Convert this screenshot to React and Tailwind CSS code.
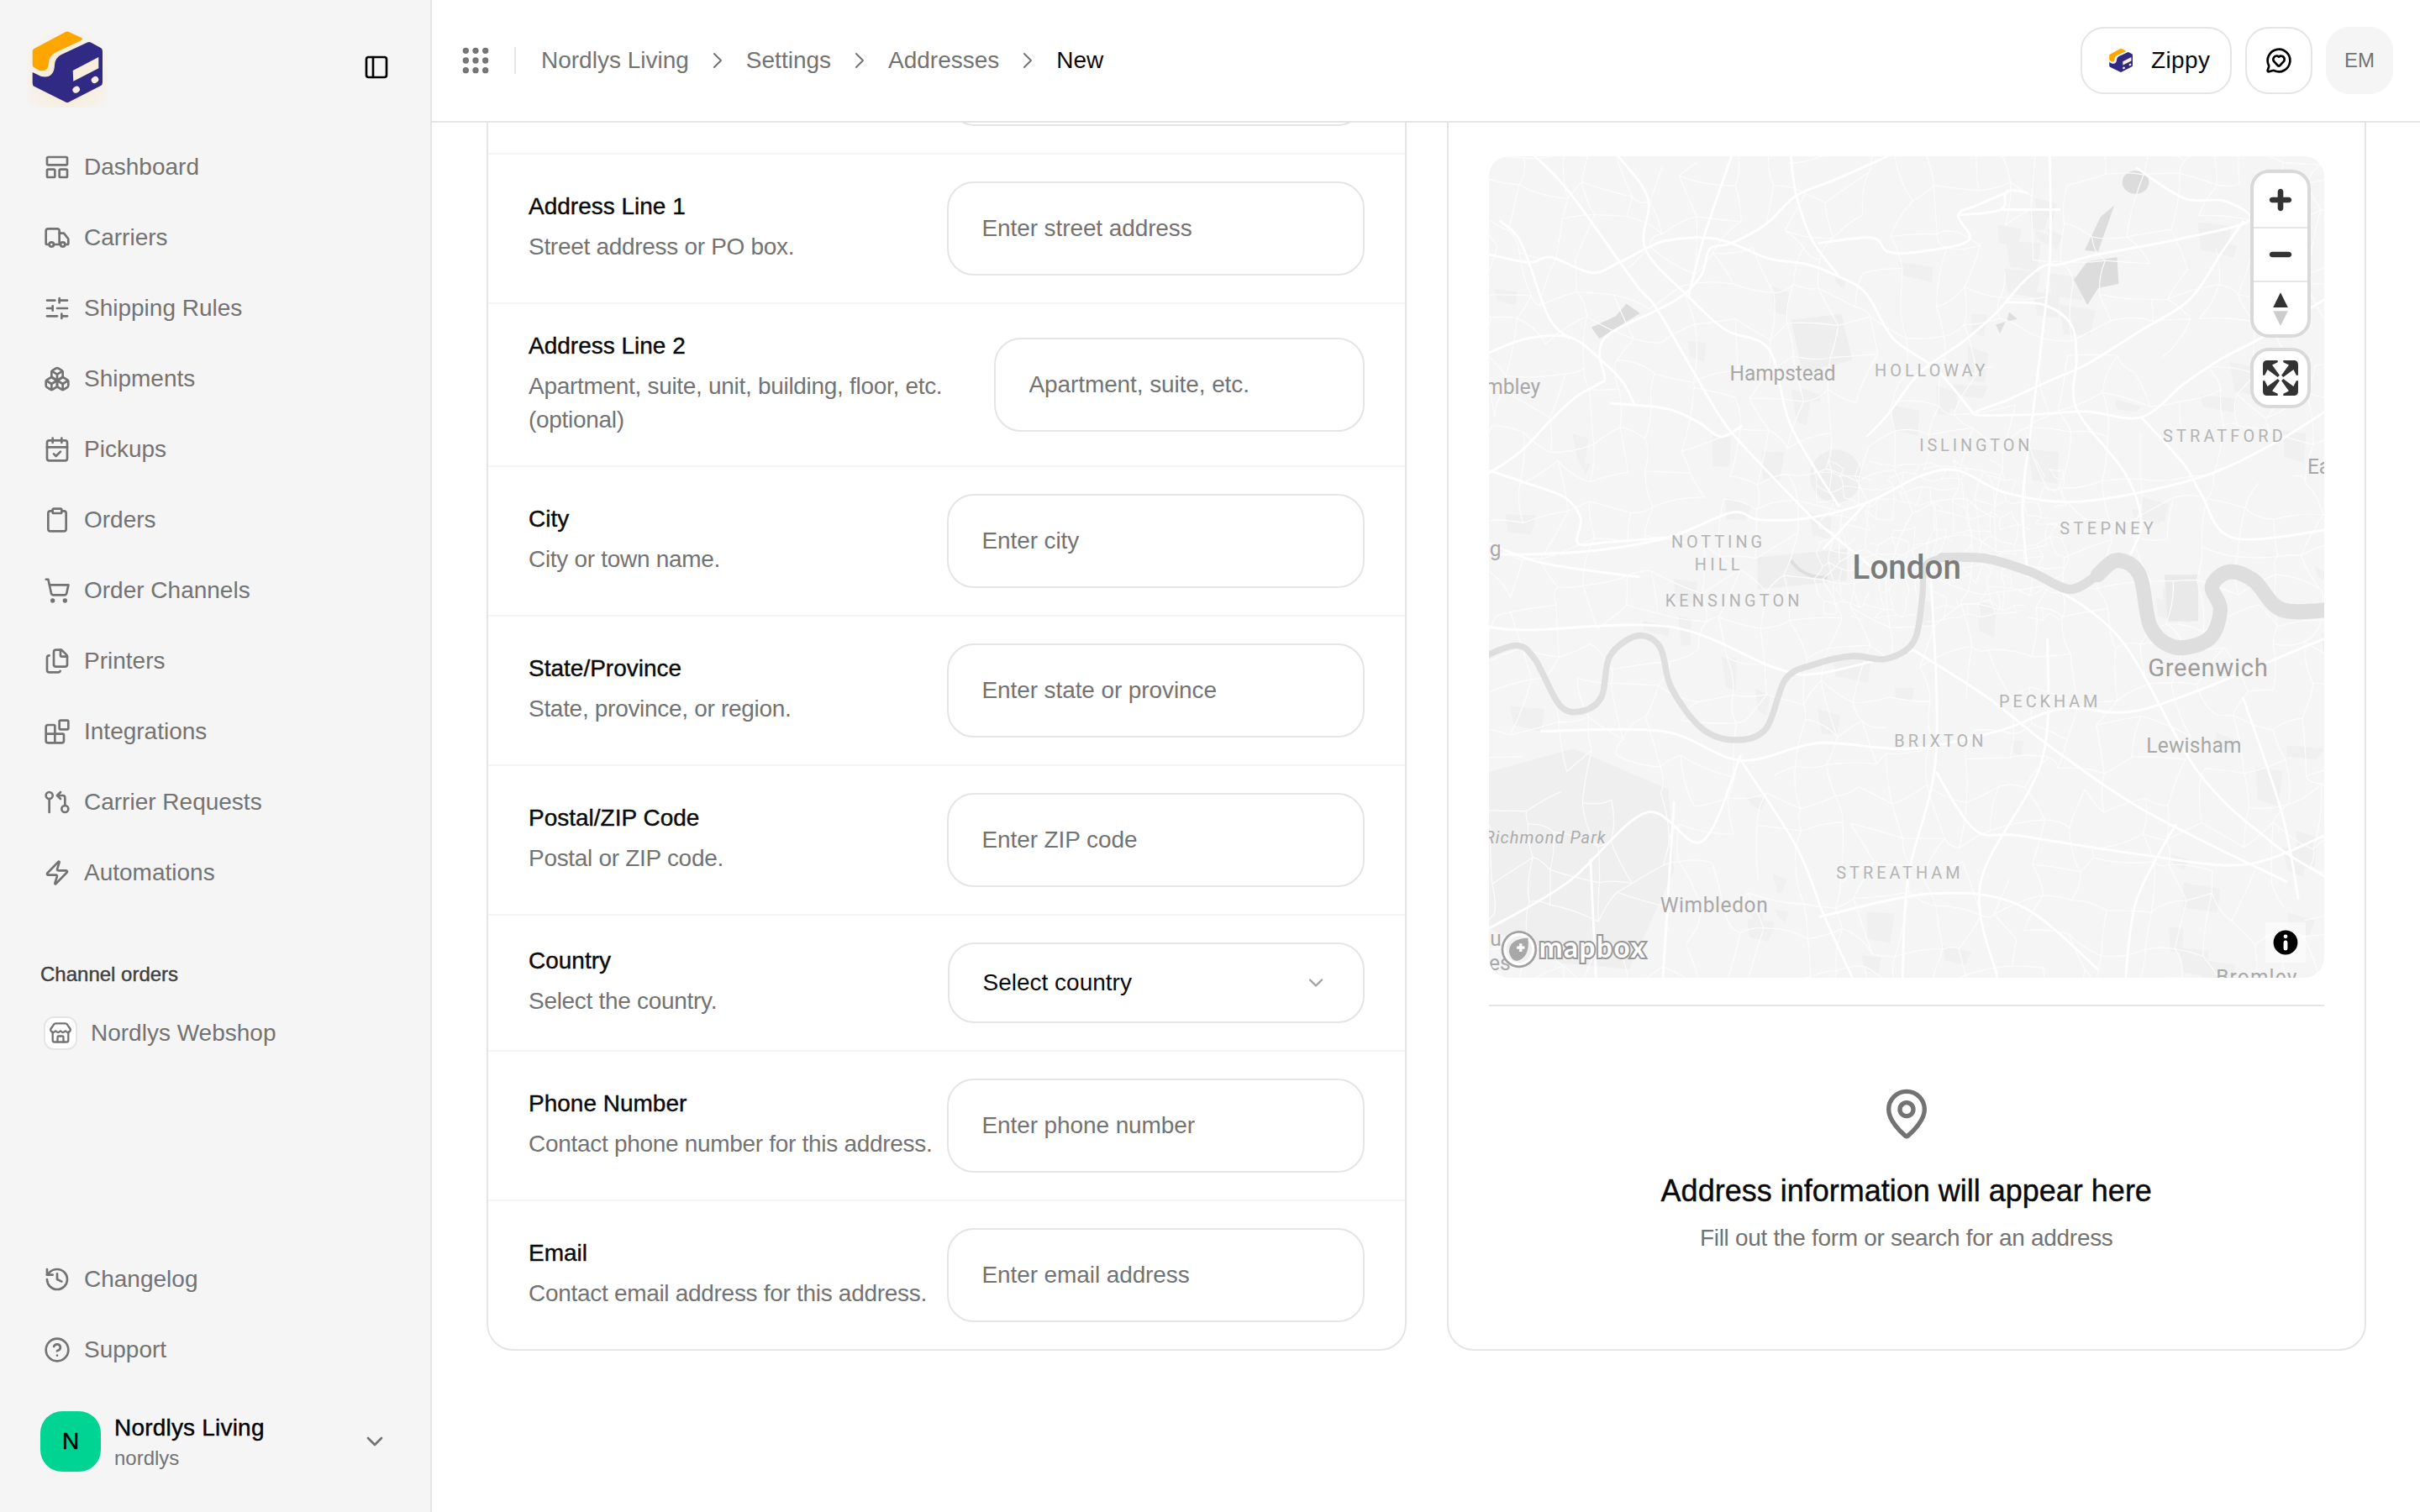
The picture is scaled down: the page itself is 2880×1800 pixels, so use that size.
import {
  Blocks,
  Boxes,
  CalendarCheck,
  ChevronDown,
  ChevronRight,
  CircleHelp,
  Clipboard,
  Files,
  GitPullRequestArrow,
  Grip,
  History,
  LayoutPanelTop,
  MapPin,
  MessageCircleHeart,
  PanelLeft,
  ShoppingCart,
  SlidersHorizontal,
  Store,
  Truck,
  Zap,
} from 'lucide-react'

const medium = '[-webkit-text-stroke:0.2px_currentColor]'

const navItems = [
  { label: 'Dashboard', icon: LayoutPanelTop },
  { label: 'Carriers', icon: Truck },
  { label: 'Shipping Rules', icon: SlidersHorizontal },
  { label: 'Shipments', icon: Boxes },
  { label: 'Pickups', icon: CalendarCheck },
  { label: 'Orders', icon: Clipboard },
  { label: 'Order Channels', icon: ShoppingCart },
  { label: 'Printers', icon: Files },
  { label: 'Integrations', icon: Blocks },
  { label: 'Carrier Requests', icon: GitPullRequestArrow },
  { label: 'Automations', icon: Zap },
]

const fields = [
  { label: 'Address Line 1', hint: 'Street address or PO box.', placeholder: 'Enter street address' },
  {
    label: 'Address Line 2',
    hint: 'Apartment, suite, unit, building, floor, etc. (optional)',
    placeholder: 'Apartment, suite, etc.',
    narrow: true,
  },
  { label: 'City', hint: 'City or town name.', placeholder: 'Enter city' },
  { label: 'State/Province', hint: 'State, province, or region.', placeholder: 'Enter state or province' },
  { label: 'Postal/ZIP Code', hint: 'Postal or ZIP code.', placeholder: 'Enter ZIP code' },
  { label: 'Country', hint: 'Select the country.', select: 'Select country' },
  { label: 'Phone Number', hint: 'Contact phone number for this address.', placeholder: 'Enter phone number' },
  { label: 'Email', hint: 'Contact email address for this address.', placeholder: 'Enter email address', last: true },
]

function Logo({ size = 48, glow = false }) {
  return (
    <svg width={size} height={size} viewBox="0 0 96 96" className="shrink-0">
      {glow && (
        <>
          <defs>
            <radialGradient id="logo-glow" cx="50%" cy="62%" r="62%">
              <stop offset="0%" stopColor="#f8e6c6" />
              <stop offset="100%" stopColor="#f5f5f5" />
            </radialGradient>
          </defs>
          <rect width="96" height="96" fill="url(#logo-glow)" />
        </>
      )}
      <path
        d="M46 6Q48 5 50 6L65 13Q67 14.5 65 16L36 29.5Q26 34 26 43Q26 54 15 52L8 48Q6.7 47 6.7 44L6.7 29Q6.7 27 8.5 26Z"
        fill="#ffa500"
      />
      <path
        d="M72 18.5Q74 17.5 76 18.5L88 25Q90 26 90 29L90 66Q90 69 88 70L50 89.5Q48 90.5 46 89.5L9 71Q6.7 70 6.7 67L6.7 54L17 59Q32 62 33 46Q33 37 41 33Z"
        fill="#312a85"
      />
      <path d="M54.7 52L85.3 36L85.3 49.3L55.3 64.7Z" fill="#f8eedd" />
      <ellipse cx="58.7" cy="74.7" rx="4.4" ry="3.8" transform="rotate(-30 58.7 74.7)" fill="#f8eedd" />
      <ellipse cx="81" cy="63" rx="4.4" ry="3.8" transform="rotate(-30 81 63)" fill="#f8eedd" />
    </svg>
  )
}

function NavRow({ icon: Icon, label }) {
  return (
    <div className="flex h-9 items-center gap-2 pl-2.5 text-sm text-neutral-500">
      <Icon size={16} className="shrink-0" />
      <span>{label}</span>
    </div>
  )
}

function Sidebar() {
  return (
    <aside className="flex h-full w-[257px] shrink-0 flex-col border-r border-neutral-200 bg-neutral-100">
      <div className="mt-4 flex h-12 items-center justify-between px-4">
        <Logo glow />
        <PanelLeft size={16} className="mr-[8px] text-black" />
      </div>

      <nav className="mt-[17.5px] flex flex-col gap-1.5 px-4">
        {navItems.map((item) => (
          <NavRow key={item.label} {...item} />
        ))}
      </nav>

      <div className="mt-[32.5px] px-4">
        <div className={`flex h-5 items-center pl-[8px] text-xs text-neutral-700 ${medium}`}>Channel orders</div>
        <div className="mt-[7px] flex h-9 items-center gap-2 pl-2.5 text-sm text-neutral-500">
          <span className="flex size-5 items-center justify-center rounded-md border border-neutral-200 bg-white">
            <Store size={14} />
          </span>
          <span>Nordlys Webshop</span>
        </div>
      </div>

      <div className="mt-auto flex flex-col gap-1.5 px-4">
        <NavRow icon={History} label="Changelog" />
        <NavRow icon={CircleHelp} label="Support" />
      </div>

      <div className="mt-[18.5px] mb-6 flex items-center px-6">
        <div className={`flex size-9 items-center justify-center rounded-[13px] bg-emerald-400 text-sm text-black ${medium}`}>
          N
        </div>
        <div className="ml-2 flex-1">
          <div className={`text-sm leading-5 tracking-[0.1px] text-black ${medium}`}>Nordlys Living</div>
          <div className="text-xs leading-4 text-neutral-500">nordlys</div>
        </div>
        <ChevronDown size={16} className="mr-px text-neutral-500" />
      </div>
    </aside>
  )
}

function Header() {
  const crumbs = ['Nordlys Living', 'Settings', 'Addresses']
  return (
    <header className="flex h-[73px] shrink-0 items-center border-b border-neutral-200 bg-white pr-4 pl-4">
      <Grip size={20} strokeWidth={2.4} className="text-neutral-500" />
      <span className="ml-[13px] h-4 w-px bg-neutral-200" />
      <div className="ml-[15px] flex items-center gap-[9px] text-sm">
        {crumbs.map((crumb) => (
          <div key={crumb} className="flex items-center gap-[9px] text-neutral-500">
            <span>{crumb}</span>
            <ChevronRight size={16} strokeWidth={1.5} />
          </div>
        ))}
        <span className="text-neutral-950">New</span>
      </div>
      <div className="ml-auto flex items-center gap-2">
        <div className="flex h-10 w-[90px] items-center gap-2.5 rounded-[14px] border border-neutral-200 pl-[15px] text-sm tracking-[0.2px] text-neutral-950">
          <Logo size={16} />
          <span>Zippy</span>
        </div>
        <div className="flex size-10 items-center justify-center rounded-[14px] border border-neutral-200">
          <MessageCircleHeart size={16} className="text-black" />
        </div>
        <div className="flex size-10 items-center justify-center rounded-[14px] bg-neutral-100 text-xs text-neutral-500">
          EM
        </div>
      </div>
    </header>
  )
}

function FieldRow({ label, hint, placeholder, select, narrow, last }) {
  return (
    <div className={`flex items-center gap-1.5 px-6 py-4 ${last ? '' : 'border-b border-neutral-100'}`}>
      <div className="-mt-px mb-px min-w-0 flex-1">
        <div className={`text-sm leading-5 text-neutral-950 ${medium}`}>{label}</div>
        <div className="mt-1 text-sm leading-5 tracking-[-0.15px] text-neutral-500">{hint}</div>
      </div>
      {select ? (
        <div className="flex h-12 w-[248px] shrink-0 items-center justify-between rounded-2xl border border-neutral-200 pr-[21px] pl-5 text-sm text-neutral-950">
          <span>{select}</span>
          <ChevronDown size={14} className="text-neutral-400" />
        </div>
      ) : (
        <input
          readOnly
          placeholder={placeholder}
          className={`h-14 shrink-0 rounded-2xl border border-neutral-200 bg-white px-5 text-sm tracking-[-0.05px] outline-none placeholder:text-neutral-500 ${
            narrow ? 'w-[220.5px]' : 'w-[248.5px]'
          }`}
        />
      )}
    </div>
  )
}

// small seeded generator so the map background stays the same between renders
function makeRandom(seed) {
  let s = seed
  return () => {
    s = (s * 16807) % 2147483647
    return (s - 1) / 2147483646
  }
}

function mesh(x0, y0, x1, y1, step, seed, skip = 0.22) {
  const rnd = makeRandom(seed)
  const cols = Math.ceil((x1 - x0) / step)
  const rows = Math.ceil((y1 - y0) / step)
  const pts = []
  for (let r = 0; r <= rows; r++) {
    for (let c = 0; c <= cols; c++) {
      pts.push([x0 + c * step + (rnd() - 0.5) * step * 0.85, y0 + r * step + (rnd() - 0.5) * step * 0.85])
    }
  }
  let d = ''
  const at = (r, c) => pts[r * (cols + 1) + c]
  const seg = (a, b) => {
    const mx = (a[0] + b[0]) / 2 + (rnd() - 0.5) * step * 0.35
    const my = (a[1] + b[1]) / 2 + (rnd() - 0.5) * step * 0.35
    return `M${a[0].toFixed(1)} ${a[1].toFixed(1)}Q${mx.toFixed(1)} ${my.toFixed(1)} ${b[0].toFixed(1)} ${b[1].toFixed(1)}`
  }
  for (let r = 0; r <= rows; r++) {
    for (let c = 0; c <= cols; c++) {
      if (c < cols && rnd() > skip) d += seg(at(r, c), at(r, c + 1))
      if (r < rows && rnd() > skip) d += seg(at(r, c), at(r + 1, c))
    }
  }
  return d
}

function patches(count, seed) {
  const rnd = makeRandom(seed)
  const list = []
  for (let i = 0; i < count; i++) {
    const x = 48 + rnd() * 1500
    const y = 68 + rnd() * 1420
    const w = 22 + rnd() * 46
    const h = 22 + rnd() * 46
    list.push(`${x},${y} ${x + w},${y + rnd() * 14} ${x + w - rnd() * 12},${y + h} ${x + rnd() * 10},${y + h - rnd() * 12}`)
  }
  return list
}

// catmull-rom through the points, so rivers and roads bend instead of kinking
const smooth = (pts) => {
  let d = `M${pts[0][0]} ${pts[0][1]}`
  for (let i = 0; i < pts.length - 1; i++) {
    const p0 = pts[i - 1] || pts[i]
    const p1 = pts[i]
    const p2 = pts[i + 1]
    const p3 = pts[i + 2] || p2
    const c1 = [p1[0] + (p2[0] - p0[0]) / 6, p1[1] + (p2[1] - p0[1]) / 6]
    const c2 = [p2[0] - (p3[0] - p1[0]) / 6, p2[1] - (p3[1] - p1[1]) / 6]
    d += `C${c1[0].toFixed(1)} ${c1[1].toFixed(1)} ${c2[0].toFixed(1)} ${c2[1].toFixed(1)} ${p2[0]} ${p2[1]}`
  }
  return d
}

// roads traced from a crop of the upper half, mapped into the map's own units
const up = (pts) => pts.map(([x, y]) => [+(x * 0.967 + 48).toFixed(1), +(y * 0.484 + 68).toFixed(1)])
const poly = (pts) => up(pts).map((p) => p.join(',')).join(' ')

const upperRoads = [
  [[85, 0], [150, 130], [270, 450], [310, 540], [380, 770], [440, 960], [520, 1130], [600, 1290]],
  [[240, 0], [295, 150], [290, 330], [370, 500], [440, 620], [520, 690], [560, 960], [650, 1250]],
  [[0, 350], [75, 378], [115, 360], [190, 415], [240, 380], [290, 330], [330, 300], [400, 290], [450, 310], [520, 365], [590, 385], [650, 430], [700, 490], [750, 650], [830, 760], [900, 920]],
  [[740, 0], [640, 85], [570, 140], [515, 240], [450, 310], [410, 330], [395, 420], [360, 495], [310, 550], [225, 630], [205, 700], [215, 790], [205, 810], [160, 860], [110, 950], [60, 1050], [0, 1130]],
  [[0, 1120], [70, 1165], [140, 1215], [170, 1290], [165, 1380], [220, 1375], [330, 1360]],
  [[1200, 40], [1290, 150], [1365, 160], [1410, 230], [1280, 295], [1130, 350], [1060, 385], [1030, 390], [990, 450], [940, 560], [880, 660], [800, 770], [740, 920], [700, 1000]],
  [[1040, 0], [1040, 380], [1010, 900], [990, 1230], [1000, 1500]],
  [[560, 0], [570, 140], [600, 300], [650, 430]],
  [[965, 125], [905, 175], [870, 210], [890, 300], [800, 340], [740, 340], [710, 290], [610, 310]],
  [[1400, 230], [1360, 340], [1300, 510], [1210, 620], [1110, 740], [1040, 800], [960, 870], [900, 920], [1010, 920], [1110, 910], [1210, 930], [1290, 810], [1360, 720], [1430, 650], [1559, 500]],
  [[1210, 930], [1290, 1100], [1320, 1200], [1380, 1360], [1559, 1330]],
  [[0, 1420], [170, 1410], [330, 1360], [450, 1270], [500, 1295], [590, 1290], [700, 1235], [800, 1140], [870, 1120], [960, 1200], [1100, 1230], [1310, 1150], [1450, 1030], [1559, 900]],
  [[960, 520], [1030, 530], [1080, 600], [1090, 720], [1090, 900], [1180, 1130], [1210, 1300], [1190, 1420]],
  [[225, 880], [330, 900], [390, 950], [430, 1000], [470, 960]],
  [[0, 1380], [100, 1450], [280, 1500]],
  [[600, 1290], [720, 1480]],
  [[700, 1235], [620, 1400]],
  [[450, 0], [400, 280], [370, 500]],
  [[0, 700], [70, 650], [150, 645], [210, 730], [250, 810], [270, 890]],
  [[1000, 130], [960, 125], [950, 190], [870, 210]],
  [[1060, 190], [950, 190]],
  [[20, 230], [60, 310], [110, 570], [150, 650]],
]

const lowerRoads = [
  [[48, 880], [120, 885], [375, 880], [560, 950], [640, 960], [810, 920]],
  [[810, 920], [940, 1000], [1060, 1090], [1230, 1200], [1480, 1320]],
  [[840, 780], [850, 1100], [800, 1310], [790, 1485]],
  [[500, 1100], [430, 1250], [330, 1200], [190, 1320], [48, 1400]],
  [[140, 1060], [360, 1060], [500, 1110], [640, 1080], [800, 1090], [960, 1060], [1080, 1020], [1230, 1020], [1547, 900]],
  [[500, 1110], [600, 1260], [650, 1380], [700, 1485]],
  [[1040, 800], [1180, 900], [1320, 1130], [1450, 1250], [1547, 1310]],
  [[230, 1280], [240, 1485]],
  [[850, 1130], [920, 1230], [1000, 1240], [1200, 1270], [1400, 1290], [1547, 1240]],
  [[640, 1380], [840, 1340], [1000, 1360], [1140, 1470]],
  [[1280, 1220], [1210, 1350], [1190, 1485]],
  [[380, 1180], [360, 1485]],
  [[1400, 1000], [1470, 1200], [1500, 1350]],
  [[1050, 900], [1040, 1110], [930, 1320], [960, 1485]],
]

const riverWest = [[30, 935], [95, 912], [130, 935], [175, 1015], [215, 1025], [250, 1000], [265, 930], [315, 895], [355, 915], [375, 985], [430, 1055], [490, 1075], [545, 1055], [580, 970], [630, 945], [700, 930], [760, 935], [810, 905], [825, 830], [830, 775], [860, 760]]
const riverMid = [[860, 760], [940, 762], [1020, 785], [1090, 815], [1140, 790]]
const riverEast = [[1140, 790], [1175, 765], [1215, 790], [1235, 880], [1280, 915], [1340, 900], [1360, 850], [1345, 810], [1375, 785], [1420, 800], [1470, 850], [1560, 850]]

const smallLabels = [
  ['HOLLOWAY', 740, 448, 198],
  ['ISLINGTON', 820, 576, 198],
  ['STRATFORD', 1257, 561, 215],
  ['STEPNEY', 1072, 720, 168],
  ['NOTTING', 375, 743, 163],
  ['HILL', 417, 782, 81],
  ['KENSINGTON', 364, 844, 241],
  ['PECKHAM', 963, 1018, 177],
  ['BRIXTON', 775, 1086, 160],
  ['STREATHAM', 671, 1314, 222],
]

const townLabels = [
  ['Hampstead', 480, 455, 190],
  ['Lewisham', 1227, 1096, 171],
  ['Wimbledon', 355, 1372, 193],
]

function MapArt() {
  const thin = mesh(40, 60, 1560, 1500, 62, 4711)
  const fine = mesh(640, 600, 1060, 860, 22, 977, 0.35)
  return (
    <svg
      viewBox="48 68 1499 1417"
      preserveAspectRatio="none"
      className="absolute inset-0 size-full font-['Roboto',sans-serif]"
    >
      <rect x="48" y="68" width="1499" height="1417" fill="#f5f5f6" />
      {patches(80, 2203).map((points) => (
        <polygon key={points} points={points} fill="#f0f0f1" />
      ))}

      <path d="M48 1130L200 1090L370 1160L380 1300L300 1470L180 1460L48 1400Z" fill="#efeff0" />
      <path d="M590 350L680 340L700 420L610 440Z" fill="#eeeeef" />
      <ellipse cx="670" cy="620" rx="46" ry="46" fill="#eeeeef" />
      <path d="M530 760L690 745L690 800L530 815Z" fill="#eeeeef" />
      <path d="M590 765Q610 795 655 795" fill="none" stroke="#dedede" strokeWidth="6" />
      <ellipse cx="1208" cy="113" rx="24" ry="20" fill="#dcdcdc" />
      <polygon points={poly([[1160, 175], [1130, 340], [1105, 335], [1135, 215]])} fill="#dddddd" />
      <polygon points={poly([[1085, 440], [1110, 375], [1165, 360], [1168, 455], [1130, 470], [1110, 530]])} fill="#dcdcdc" />
      <polygon points={poly([[190, 610], [205, 650], [280, 560], [255, 525], [235, 570]])} fill="#dcdcdc" />
      <polygon points={poly([[940, 600], [958, 590], [948, 632]])} fill="#dedede" />
      <polygon points={poly([[965, 555], [980, 580], [960, 590]])} fill="#dedede" />
      <path d="M1260 790L1320 790L1320 870L1265 870Z" fill="#e9e9ea" />

      <path d={thin} fill="none" stroke="#fcfcfc" strokeWidth="1.8" />
      <path d={fine} fill="none" stroke="#fcfcfc" strokeWidth="1.5" />
      {upperRoads.map((r, i) => (
        <path key={i} d={smooth(up(r))} fill="none" stroke="#ffffff" strokeWidth="4.2" />
      ))}
      {lowerRoads.map((r, i) => (
        <path key={i} d={smooth(r)} fill="none" stroke="#ffffff" strokeWidth="4.2" />
      ))}

      <g fill="none" stroke="#dedede" strokeLinecap="round">
        <path d={smooth(riverWest)} strokeWidth="11" />
        <path d={smooth(riverMid)} strokeWidth="16" />
        <path d={smooth(riverEast)} strokeWidth="26" />
      </g>

      <g fontSize="30" fill="#b4b4b4">
        {smallLabels.map(([t, x, y, w]) => (
          <text key={t} x={x} y={y} textLength={w}>
            {t}
          </text>
        ))}
      </g>
      <g fontSize="37" fill="#a8a8a8">
        {townLabels.map(([t, x, y, w]) => (
          <text key={t} x={x} y={y} textLength={w}>
            {t}
          </text>
        ))}
        <text x="140" y="478" textAnchor="end">mbley</text>
        <text x="70" y="757" textAnchor="end">g</text>
        <text x="1516" y="615">Ea</text>
        <text x="1352" y="1497" textLength="145">Bromley</text>
        <text x="50" y="1430">u</text>
        <text x="48" y="1472">es</text>
      </g>
      <text x="40" y="1253" fontSize="30" fontStyle="italic" fill="#ababab" textLength="217">
        Richmond Park
      </text>
      <text x="1230" y="965" fontSize="44" fill="#9c9c9c" textLength="215">
        Greenwich
      </text>
      <text x="700" y="797" fontSize="58" fontWeight="500" fill="#7b7b7b" textLength="195">
        London
      </text>

      <circle cx="102" cy="1436" r="32" fill="#a0a0a0" />
      <circle cx="102" cy="1436" r="28" fill="#ffffff" />
      <circle cx="102" cy="1436" r="23" fill="#f1f1f1" />
      <path d="M84 1440Q84 1418 118 1416Q122 1450 98 1456Q88 1456 84 1440Z" fill="#a8a8a8" />
      <path d="M105 1426v14M98 1433h14" stroke="#ffffff" strokeWidth="5" />
      <text
        x="138"
        y="1450"
        fontSize="50"
        fontWeight="700"
        textLength="190"
        fill="#ffffff"
        stroke="#979797"
        strokeWidth="6"
        paintOrder="stroke"
        className="font-['Lato',sans-serif]"
      >
        mapbox
      </text>
    </svg>
  )
}

function MapCtrl({ children, border }) {
  return (
    <div className={`flex size-8 items-center justify-center ${border ? 'border-t border-neutral-200' : ''}`}>
      <svg viewBox="0 0 29 29" className="size-8">
        {children}
      </svg>
    </div>
  )
}

function MapBlock() {
  return (
    <div className="relative h-[489px] overflow-hidden rounded-xl">
      <MapArt />

      <div className="absolute top-2.5 right-2.5 flex flex-col gap-2.5">
        <div className="overflow-hidden rounded-[9px] bg-white ring-2 ring-[#d9d9d9]">
          <MapCtrl>
            <path
              fill="#333"
              d="M14.5 8.5c-.75 0-1.5.75-1.5 1.5v3h-3c-.75 0-1.5.75-1.5 1.5S9.25 16 10 16h3v3c0 .75.75 1.5 1.5 1.5S16 19.75 16 19v-3h3c.75 0 1.5-.75 1.5-1.5S19.75 13 19 13h-3v-3c0-.75-.75-1.5-1.5-1.5z"
            />
          </MapCtrl>
          <MapCtrl border>
            <path
              fill="#333"
              d="M10 13c-.75 0-1.5.75-1.5 1.5S9.25 16 10 16h9c.75 0 1.5-.75 1.5-1.5S19.75 13 19 13h-9z"
            />
          </MapCtrl>
          <MapCtrl border>
            <path fill="#333" d="M10.5 14l4-8 4 8h-8z" />
            <path fill="#ccc" d="M10.5 16l4 8 4-8h-8z" />
          </MapCtrl>
        </div>
        <div className="overflow-hidden rounded-[9px] bg-white ring-2 ring-[#d9d9d9]">
          <MapCtrl>
            <path
              fill="#333"
              d="M24 16v5.5c0 1.75-.75 2.5-2.5 2.5H16v-1l3-1.5-4-5.5 1-1 5.5 4 1.5-3h1zM6 16l1.5 3 5.5-4 1 1-4 5.5 3 1.5v1H7.5C5.75 24 5 23.25 5 21.5V16h1zm7-11v1l-3 1.5 4 5.5-1 1-5.5-4L6 13H5V7.5C5 5.75 5.75 5 7.5 5H13zm11 2.5c0-1.75-.75-2.5-2.5-2.5H16v1l3 1.5-4 5.5 1 1 5.5-4 1.5 3h1V7.5z"
            />
          </MapCtrl>
        </div>
      </div>

      <div className="absolute right-[11px] bottom-[9px] flex size-6 items-center justify-center bg-white/50">
        <svg viewBox="0 0 20 20" className="size-6">
          <path
            fillRule="evenodd"
            d="M4 10a6 6 0 1 0 12 0 6 6 0 1 0-12 0m5-3a1 1 0 1 0 2 0 1 1 0 1 0-2 0m0 3a1 1 0 1 1 2 0v3a1 1 0 1 1-2 0"
          />
        </svg>
      </div>
    </div>
  )
}

export default function App() {
  return (
    <div className="flex h-[900px] w-[1440px] overflow-hidden bg-white font-['Liberation_Sans',Arial,sans-serif] [zoom:2]">
      <Sidebar />
      <div className="flex min-w-0 flex-1 flex-col">
        <Header />
        <main className="flex-1 overflow-hidden">
          {/* page is scrolled: the top of both cards sits under the header */}
          <div className="mt-[-71px] grid grid-cols-2 gap-6 pr-8 pl-[32.5px]">
            <section className="rounded-2xl border border-neutral-200 bg-white">
              {/* only the bottom edge of this row's input is still in view */}
              <div className="flex justify-end border-b border-neutral-100 px-6 py-4">
                <div className="h-14 w-[248px] rounded-2xl border border-neutral-200" />
              </div>
              {fields.map((field) => (
                <FieldRow key={field.label} {...field} />
              ))}
            </section>

            <section className="flex flex-col rounded-2xl border border-neutral-200 bg-white px-6 pt-[90px]">
              <MapBlock />
              <div className="mt-[16px] h-px bg-neutral-200" />
              <div className="flex flex-col items-center pt-12 text-center">
                <MapPin size={32} className="text-neutral-500" />
                <h2 className={`mt-4 text-lg leading-7 text-neutral-950 ${medium}`}>
                  Address information will appear here
                </h2>
                <p className="mt-1 text-sm leading-5 tracking-[-0.15px] text-neutral-500">
                  Fill out the form or search for an address
                </p>
              </div>
            </section>
          </div>
        </main>
      </div>
    </div>
  )
}
